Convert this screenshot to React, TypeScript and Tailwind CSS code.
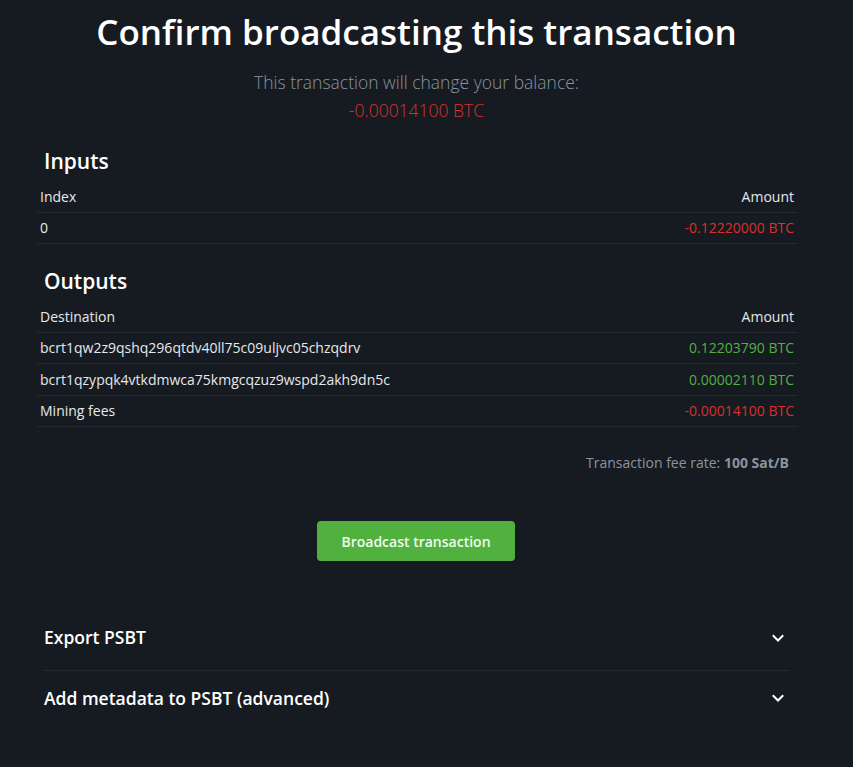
import React from "react";

const font = { fontFamily: '"Open Sans", "Liberation Sans", sans-serif' };

function Chevron() {
  return (
    <svg width="14" height="14" viewBox="0 0 14 14" fill="none" className="text-white">
      <path d="M2.5 5 L7 9.5 L11.5 5" stroke="currentColor" strokeWidth="2" strokeLinecap="square" />
    </svg>
  );
}

function Row({ left, right, color }: { left: string; right: string; color?: string }) {
  return (
    <div className="flex h-[31.5px] items-center justify-between border-b border-[#252a31] pl-[3px] pr-[4px] text-[14px]">
      <span className="text-[#e6e8ea]">{left}</span>
      <span className={color ?? "text-[#e6e8ea]"}>{right}</span>
    </div>
  );
}

export default function App() {
  const red = "text-[#d9302c]";
  const green = "text-[#51b13e]";
  return (
    <div style={font} className="min-h-[767px] w-full bg-[#161b22] text-white">
      <div className="mx-auto flex w-[761px] flex-col pt-[10px] -translate-x-[9px]">
        <h1 className="pr-[2px] text-center text-[35px] font-semibold leading-[43px] text-white">
          Confirm broadcasting this transaction
        </h1>
        <div className="mt-[15px] flex flex-col items-center pr-[2px] text-[17.5px] font-light leading-[28px]">
          <span className="text-[#8b949e]">This transaction will change your balance:</span>
          <span className={red}>-0.00014100 BTC</span>
        </div>

        <h2 className="mt-[24px] pl-[7px] text-[21px] font-semibold leading-[26px]">Inputs</h2>
        <div className="mt-[7px] flex flex-col">
          <Row left="Index" right="Amount" />
          <Row left="0" right="-0.12220000 BTC" color={red} />
        </div>

        <h2 className="mt-[24px] pl-[7px] text-[21px] font-semibold leading-[26px]">Outputs</h2>
        <div className="mt-[7px] flex flex-col">
          <Row left="Destination" right="Amount" />
          <Row left="bcrt1qw2z9qshq296qtdv40ll75c09uljvc05chzqdrv" right="0.12203790 BTC" color={green} />
          <Row left="bcrt1qzypqk4vtkdmwca75kmgcqzuz9wspd2akh9dn5c" right="0.00002110 BTC" color={green} />
          <Row left="Mining fees" right="-0.00014100 BTC" color={red} />
        </div>

        <div className="mt-[26px] pr-[9px] text-right text-[14px] leading-[20px] text-[#8b949e]">
          Transaction fee rate: <span className="font-bold">100 Sat/B</span>
        </div>

        <div className="mt-[48px] flex justify-center pr-[3px]">
          <button className="h-[40px] w-[198px] rounded-[4px] bg-[#51b13e] text-[14px] font-semibold text-[#f0fbee]">
            Broadcast transaction
          </button>
        </div>

        <div className="ml-[7px] mr-[8px] mt-[44px] flex flex-col">
          <div className="flex h-[66px] items-center justify-between border-b border-[#252a31] pr-[5px]">
            <span className="text-[17.5px] font-semibold">Export PSBT</span>
            <Chevron />
          </div>
          <div className="flex h-[54px] items-center justify-between pr-[5px]">
            <span className="text-[17.5px] font-semibold">Add metadata to PSBT (advanced)</span>
            <Chevron />
          </div>
        </div>
      </div>
    </div>
  );
}
